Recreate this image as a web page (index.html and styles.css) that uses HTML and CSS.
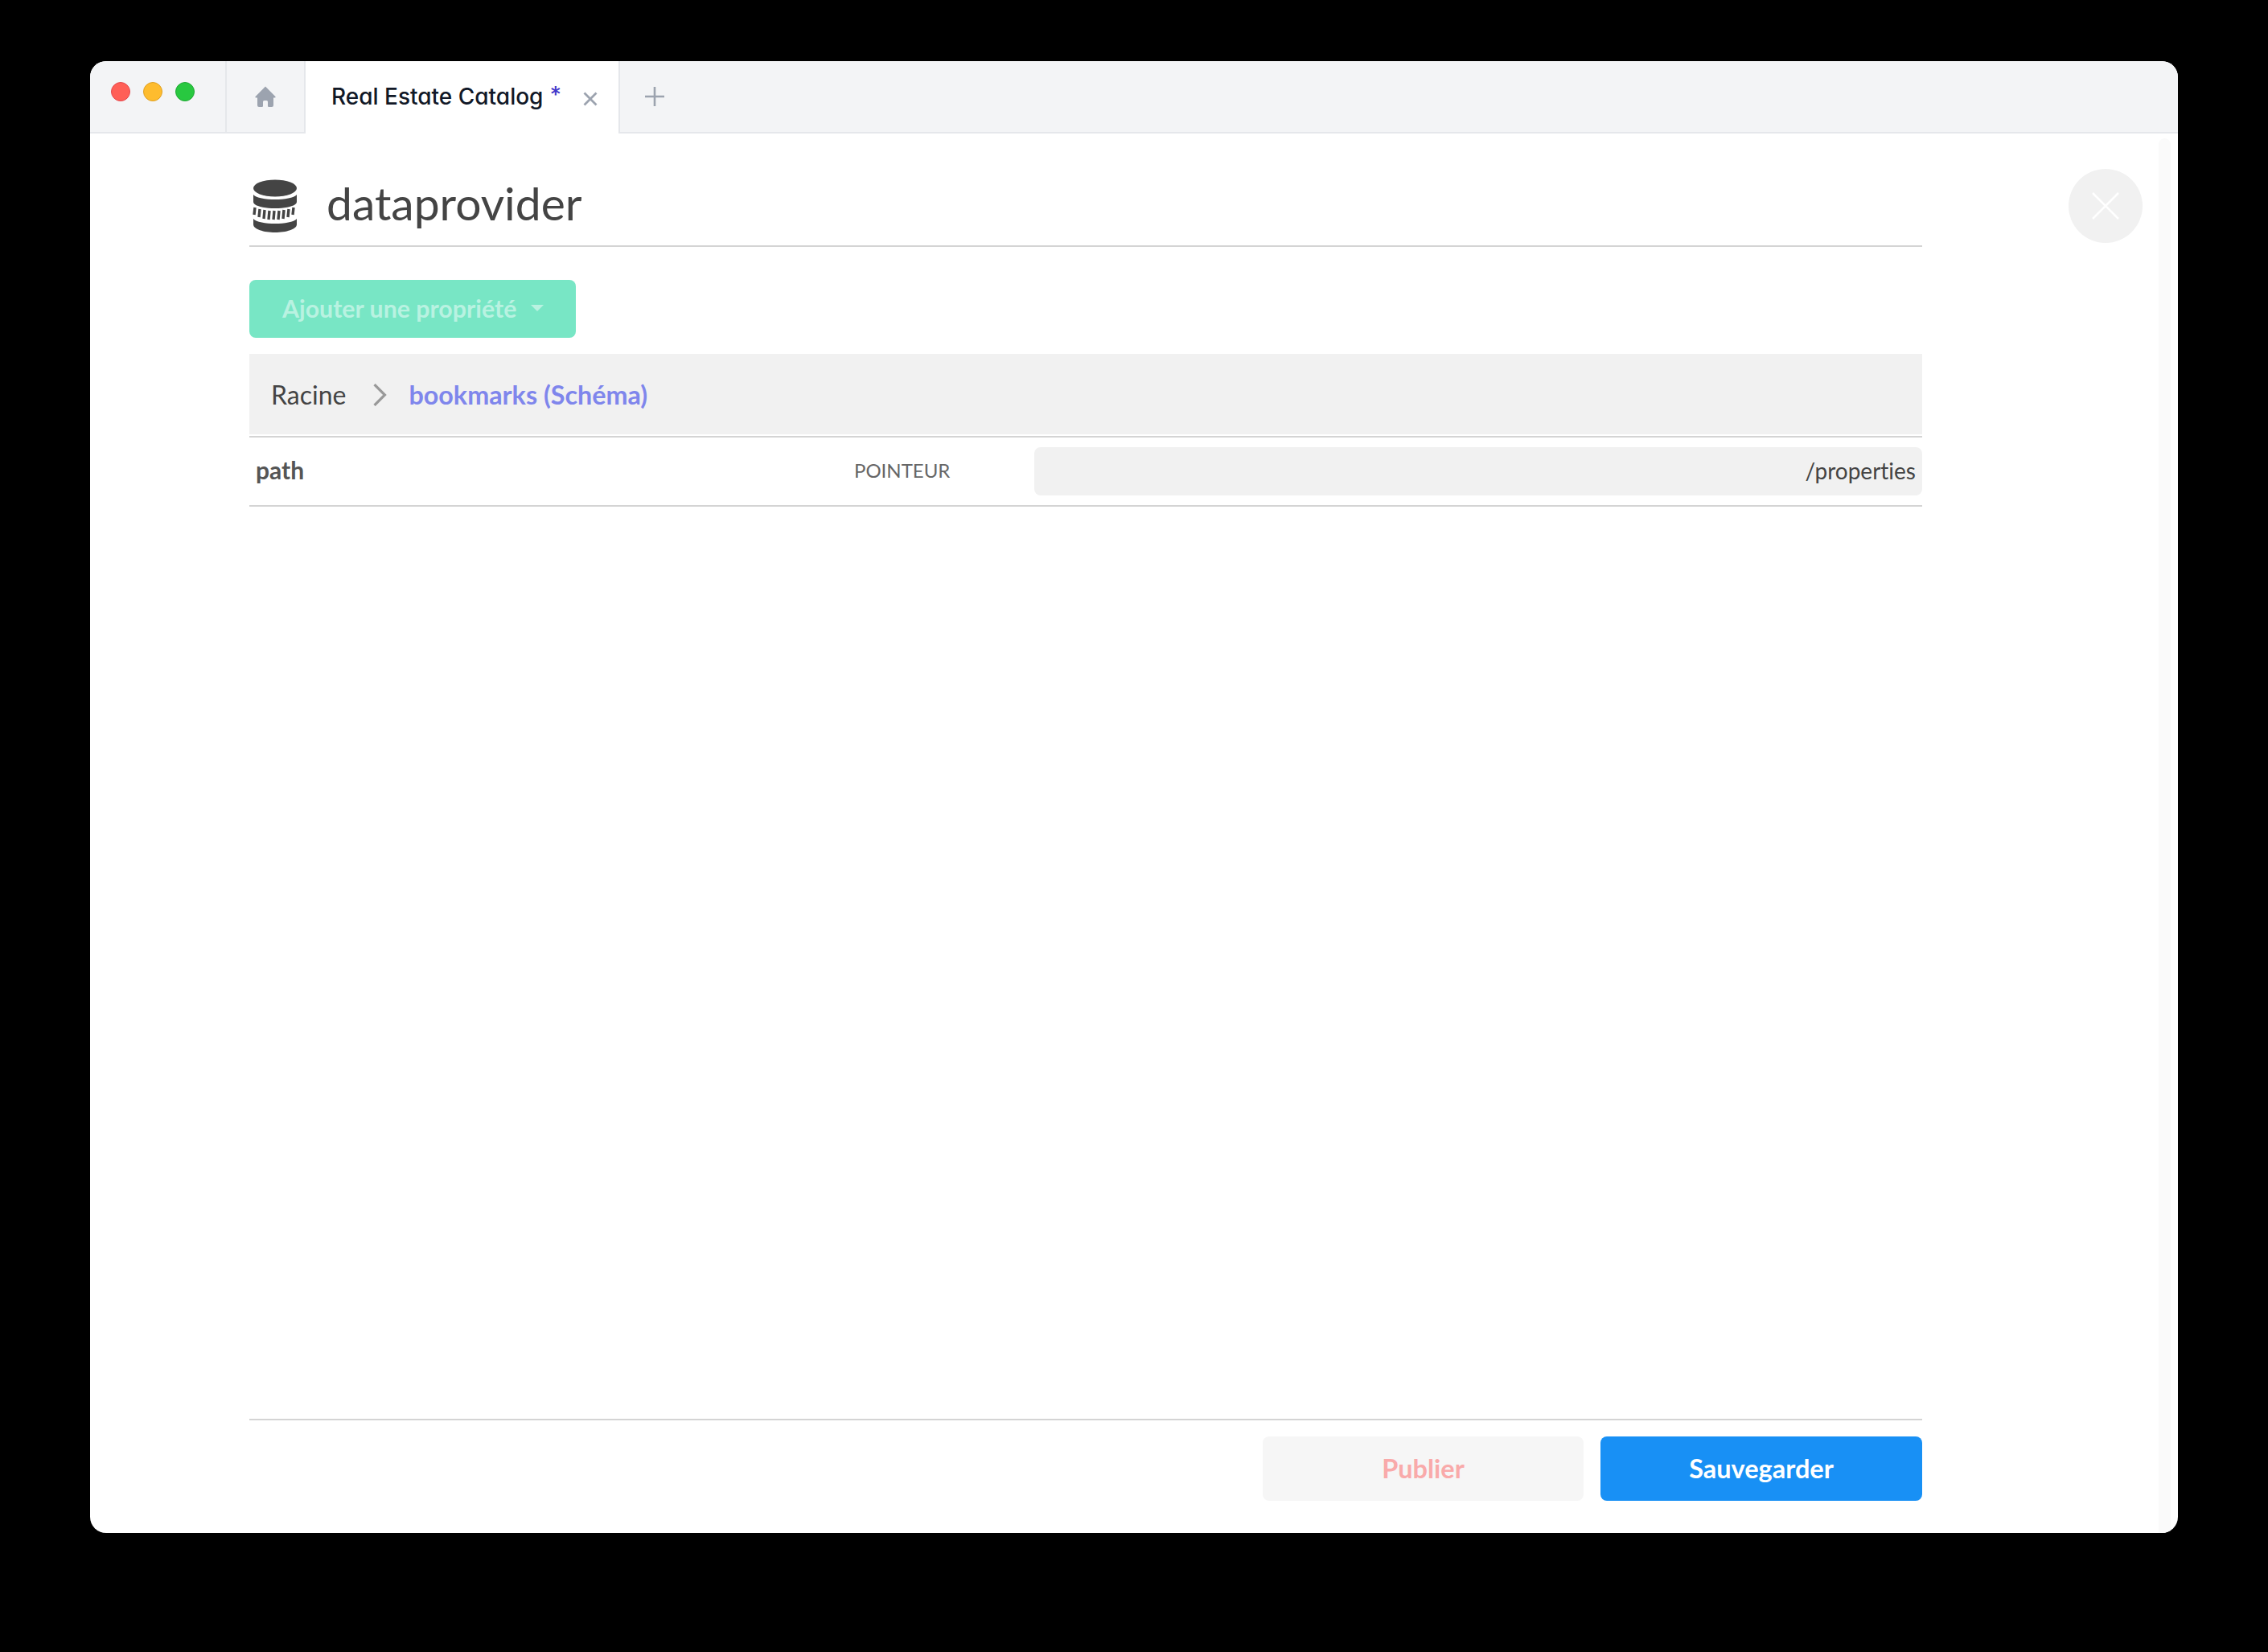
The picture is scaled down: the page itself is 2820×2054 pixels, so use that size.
FILE: index.html
```html
<!DOCTYPE html>
<html lang="fr">
<head>
<meta charset="utf-8">
<title>dataprovider</title>
<link rel="stylesheet" href="styles.css">
</head>
<body>
<div class="window">
  <header class="tabbar">
    <div class="lights">
      <span class="light red"></span>
      <span class="light yellow"></span>
      <span class="light green"></span>
    </div>
    <div class="home-tab">
      <svg class="home-icon" viewBox="0 0 26 26"><path d="M13 0.5 L25.6 13.2 Q26 14.6 24.4 14.6 L23 14.6 L23 24 Q23 26 21 26 L17.2 26 Q16 26 16 24.8 L16 19.5 Q16 18 14.5 18 L11.5 18 Q10 18 10 19.5 L10 24.8 Q10 26 8.8 26 L5 26 Q3 26 3 24 L3 14.6 L1.6 14.6 Q0 14.6 0.4 13.2 Z"/></svg>
    </div>
    <div class="tab">
      <span class="tab-title">Real Estate Catalog</span>
      <span class="tab-star">*</span>
      <svg class="tab-close" viewBox="0 0 18 18"><path d="M1.5 1.5 L16.5 16.5 M16.5 1.5 L1.5 16.5"/></svg>
    </div>
    <div class="tab-add">
      <svg class="plus" viewBox="0 0 24 24"><path d="M12 0 V24 M0 12 H24"/></svg>
    </div>
  </header>
  <main class="content">
    <div class="title-row">
      <svg class="db-icon" viewBox="0 0 56 66">
        <ellipse class="db-fill" cx="28" cy="11" rx="27" ry="10.5"/>
        <path class="db-fill" d="M1 19 C8 27 48 27 55 19 V28 C55 33 42 36 28 36 C14 36 1 33 1 28 Z"/>
        <path class="db-ticks" d="M3 35 L2 44 M9 37 L8 47 M15 38 L14 49 M21 39 L20 50 M27 39 L26 50 M33 39 L32 50 M39 38 L38 49 M45 37 L44 47 M51 35 L50 44"/>
        <path class="db-fill" d="M1 49 C8 57 48 57 55 49 V56 C55 62 42 66 28 66 C14 66 1 62 1 56 Z"/>
      </svg>
      <h1 class="title">dataprovider</h1>
    </div>
    <div class="toolbar">
      <button class="add-btn" type="button">Ajouter une propriété<span class="caret"></span></button>
    </div>
    <nav class="crumbs">
      <span class="crumb-root">Racine</span>
      <svg class="crumb-sep" viewBox="0 0 16 26"><path d="M2 1 L14 13 L2 25"/></svg>
      <span class="crumb-current">bookmarks (Schéma)</span>
    </nav>
    <div class="prop-row">
      <span class="prop-name">path</span>
      <span class="prop-type">POINTEUR</span>
      <div class="prop-value">/properties</div>
    </div>
    <div class="spacer"></div>
    <footer class="actions">
      <button class="btn btn-publish" type="button">Publier</button>
      <button class="btn btn-save" type="button">Sauvegarder</button>
    </footer>
  </main>
  <button class="close-circle" type="button" aria-label="Fermer">
    <svg viewBox="0 0 34 34"><path d="M1 1 L33 33 M33 1 L1 33"/></svg>
  </button>
  <div class="scroll-track"></div>
</div>
</body>
</html>
```
FILE: styles.css
```css
* { box-sizing: border-box; }
html, body { margin: 0; height: 100%; }
body {
  background: #000;
  padding: 76px 112px 148px;
  font-family: "Lato", sans-serif;
  font-variant-ligatures: none;
  color: #444;
}
button { font-family: inherit; font-variant-ligatures: none; border: 0; padding: 0; }

.window {
  position: relative;
  width: 2596px;
  height: 1830px;
  background: #fff;
  border-radius: 20px;
  overflow: hidden;
  display: flex;
  flex-direction: column;
}

/* Tab bar */
.tabbar {
  height: 90px;
  flex: none;
  display: flex;
  background: #f3f4f6;
  border-bottom: 2px solid #e5e7eb;
}
.lights {
  width: 168px;
  padding: 26px 0 0 26px;
  display: flex;
  gap: 16px;
}
.light { width: 24px; height: 24px; border-radius: 50%; border: 1px solid; }
.red { background: #ff5f57; border-color: #e5484d; }
.yellow { background: #febc2e; border-color: #dfa023; }
.green { background: #28c840; border-color: #1fa834; }
.home-tab {
  width: 100px;
  margin-bottom: -2px;
  border-left: 2px solid #e5e7eb;
  border-right: 2px solid #e5e7eb;
  border-bottom: 2px solid #e5e7eb;
  display: flex;
  justify-content: center;
  padding-top: 31px;
}
.home-icon { width: 26px; height: 26px; fill: #9ca3af; }
.tab {
  width: 391px;
  margin-bottom: -2px;
  background: #fff;
  border-right: 2px solid #e5e7eb;
  padding-left: 32px;
  display: flex;
  align-items: flex-start;
}
.tab-title {
  font-family: "Inter", sans-serif;
  font-feature-settings: "cv11";
  font-size: 28px;
  font-weight: 500;
  line-height: 32px;
  margin-top: 28px;
  color: #111827;
  white-space: nowrap;
}
.tab-star { font-family: "Inter", sans-serif; font-size: 28px; font-weight: 500; line-height: 32px; margin: 26px 0 0 8px; color: #4338ca; }
.tab-close { width: 18px; height: 18px; margin: 38px 0 0 27px; fill: none; stroke: #9ca3af; stroke-width: 2.8; }
.tab-add { padding: 32px 0 0 31px; }
.plus { display: block; width: 24px; height: 24px; fill: none; stroke: #9ca3af; stroke-width: 2.6; }

/* Content */
.content {
  flex: 1;
  min-height: 0;
  padding: 0 318px 40px 198px;
  display: flex;
  flex-direction: column;
}
.title-row {
  height: 141px;
  flex: none;
  border-bottom: 2px solid #d4d4d4;
  display: flex;
  align-items: flex-start;
  padding: 57px 0 0 4px;
}
.db-icon { width: 56px; height: 66px; flex: none; }
.db-fill { fill: #444; }
.db-ticks { fill: none; stroke: #444; stroke-width: 3.4; }
.title {
  margin: -7px 0 0 36px;
  font-size: 57px;
  line-height: 72px;
  font-weight: 400;
  color: #444;
}
.toolbar { padding-top: 41px; flex: none; }
.add-btn {
  width: 406px;
  height: 72px;
  border-radius: 8px;
  background: #78e6c5;
  color: #b9f2e1;
  font-size: 30.3px;
  font-weight: 700;
  display: flex;
  align-items: center;
  padding-left: 41px;
  padding-bottom: 2px;
  white-space: nowrap;
}
.caret {
  margin-left: 18px;
  border-left: 8px solid transparent;
  border-right: 8px solid transparent;
  border-top: 8px solid #b9f2e1;
}
.crumbs {
  margin-top: 20px;
  height: 100px;
  flex: none;
  background: #f1f1f1;
  display: flex;
  align-items: center;
  padding-left: 27px;
  font-size: 32px;
}
.crumb-root { color: #444; }
.crumb-sep { width: 18px; height: 28px; margin: 2px 27px 0 33px; fill: none; stroke: #999; stroke-width: 3; }
.crumb-current { color: #7f86ec; font-weight: 700; font-size: 32.3px; }
.prop-row {
  margin-top: 2px;
  height: 88px;
  flex: none;
  border-top: 2px solid #d4d4d4;
  border-bottom: 2px solid #d4d4d4;
  display: flex;
  align-items: center;
  padding-left: 8px;
}
.prop-name { width: 744px; font-size: 30px; font-weight: 700; color: #555; margin-bottom: 4px; }
.prop-type { width: 224px; font-size: 24px; color: #666; margin-bottom: 3px; }
.prop-value {
  flex: 1;
  height: 60px;
  border-radius: 8px;
  background: #f1f1f1;
  display: flex;
  align-items: center;
  justify-content: flex-end;
  padding-right: 8px;
  padding-bottom: 2px;
  font-size: 28px;
  color: #444;
}
.spacer { flex: 1; }
.actions {
  height: 102px;
  flex: none;
  border-top: 2px solid #d4d4d4;
  padding-top: 20px;
  display: flex;
  justify-content: flex-end;
  gap: 21px;
}
.btn { width: 400px; height: 80px; border-radius: 8px; font-size: 32.5px; font-weight: 700; padding-bottom: 1px; }
.btn-publish { width: 399px; background: #f6f6f6; color: #f9aaaa; }
.btn-save { background: #1890f5; color: #fff; }

/* Overlays */
.close-circle {
  position: absolute;
  left: 2460px;
  top: 134px;
  width: 92px;
  height: 92px;
  border-radius: 50%;
  background: #f1f1f1;
  display: flex;
  align-items: center;
  justify-content: center;
}
.close-circle svg { width: 34px; height: 34px; fill: none; stroke: #fff; stroke-width: 2.6; }
.scroll-track {
  position: absolute;
  left: 2572px;
  top: 96px;
  bottom: 0;
  width: 15px;
  border-radius: 8px 8px 0 0;
  background: #fafafa;
}
```
